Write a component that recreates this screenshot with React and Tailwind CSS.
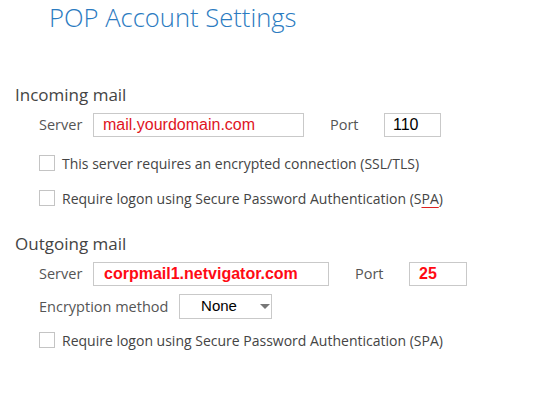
import React from 'react';

const ui = { fontFamily: '"Open Sans", "Noto Sans", sans-serif' };
const arial = { fontFamily: '"Liberation Sans", Arial, sans-serif' };

function Check({ children }) {
  return (
    <div className="flex h-[24px] items-center pl-[39px]">
      <span className="h-[16px] w-[16px] shrink-0 border border-[#c4c4c4] bg-white" />
      <span className="ml-[7px] text-[14px] text-[#444]">{children}</span>
    </div>
  );
}

function Box({ className, children, bold }) {
  return (
    <div className={`flex h-[24px] items-center border border-[#c9c9c9] bg-white ${className}`} style={arial}>
      <span className={bold ? 'text-[16px] font-bold text-[#ff0a14]' : 'text-[16px] text-[#e0141e]'}>{children}</span>
    </div>
  );
}

export default function App() {
  return (
    <div className="h-[409px] w-[547px] overflow-hidden bg-white" style={ui}>
      <div className="pl-[49px] text-[25.6px] font-light leading-[36px] text-[#2b7bc1]">POP Account Settings</div>

      <div className="mt-[47px] pl-[15px] text-[17px] leading-[24px] text-[#444]">Incoming mail</div>
      <div className="mt-[6px] flex h-[24px] items-center text-[14.5px] text-[#555]">
        <span className="w-[93px] pl-[39px]">Server</span>
        <Box className="w-[211px] pl-[9px]">mail.yourdomain.com</Box>
        <span className="w-[80px] pl-[26px]">Port</span>
        <div className="flex h-[24px] w-[57px] items-center border border-[#c9c9c9] pl-[8px] text-[16px] text-black" style={arial}>110</div>
      </div>
      <div className="mt-[14px]"><Check>This server requires an encrypted connection (SSL/TLS)</Check></div>
      <div className="mt-[11px]">
        <Check>
          Require logon using Secure Password Authentication (S<span className="underline decoration-[#d22] decoration-1 underline-offset-[3px]">PA</span>)
        </Check>
      </div>

      <div className="mt-[22px] pl-[15px] text-[17px] leading-[24px] text-[#444]">Outgoing mail</div>
      <div className="mt-[6px] flex h-[24px] items-center text-[14.5px] text-[#555]">
        <span className="w-[93px] pl-[39px]">Server</span>
        <Box className="w-[236px] pl-[10px]" bold>corpmail1.netvigator.com</Box>
        <span className="w-[80px] pl-[26px]">Port</span>
        <Box className="w-[58px] pl-[9px]" bold>25</Box>
      </div>
      <div className="mt-[8px] flex h-[25px] items-center text-[14.5px] text-[#555]">
        <span className="w-[179px] pl-[39px]">Encryption method</span>
        <div className="flex h-[25px] w-[93px] items-center border border-[#c9c9c9] bg-white">
          <span className="w-[78px] text-center text-[15px] text-black" style={arial}>None</span>
          <svg width="10" height="6" viewBox="0 0 10 6" className="ml-[2px]">
            <path d="M0 0 L10 0 L5 5 Z" fill="#777" />
          </svg>
        </div>
      </div>
      <div className="mt-[9px]"><Check>Require logon using Secure Password Authentication (SPA)</Check></div>
    </div>
  );
}
